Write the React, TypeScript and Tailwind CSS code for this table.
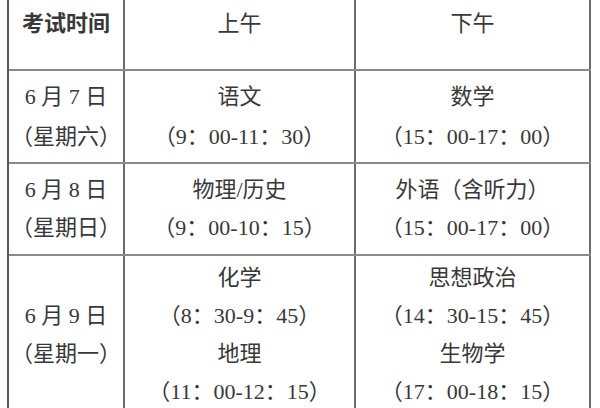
import React from "react";

const font = {
  fontFamily: '"Liberation Serif", "Noto Sans CJK SC", serif',
};

function Cell({
  lines,
  bold,
  className = "",
}: {
  lines: string[];
  bold?: boolean;
  className?: string;
}) {
  return (
    <div
      className={`flex flex-col items-center justify-center border-r-2 border-[#6b6b6b] text-[22px] leading-[38px] text-[#383838] ${
        bold ? "font-bold" : ""
      } ${className}`}
    >
      {lines.map((l, i) => (
        <div key={i} className="whitespace-pre">
          {l}
        </div>
      ))}
    </div>
  );
}

export default function App() {
  return (
    <div className="h-[408px] w-[600px] overflow-hidden bg-white" style={font}>
      <div className="ml-[7px] w-[584px] border-l-2 border-[#5a5a5a]">
        {/* header */}
        <div className="grid h-[71px] grid-cols-[116px_231px_235px] border-b-2 border-[#8a8a8a]">
          <Cell lines={["考试时间"]} bold className="justify-start pt-[5px] text-[#2a2a2a]" />
          <Cell lines={["上午"]} className="justify-start pt-[5px] text-[#2a2a2a]" />
          <Cell lines={["下午"]} className="justify-start pt-[5px] text-[#2a2a2a]" />
        </div>
        {/* row 1 */}
        <div className="grid h-[93px] grid-cols-[116px_231px_235px] border-b-2 border-[#8a8a8a]">
          <Cell lines={["6 月 7 日", "（星期六）"]} className="leading-[40px]" />
          <Cell lines={["语文", "（9：00-11：30）"]} className="leading-[40px]" />
          <Cell lines={["数学", "（15：00-17：00）"]} className="leading-[40px]" />
        </div>
        {/* row 2 */}
        <div className="grid h-[92px] grid-cols-[116px_231px_235px] border-b-2 border-[#8a8a8a]">
          <Cell lines={["6 月 8 日", "（星期日）"]} />
          <Cell lines={["物理/历史", "（9：00-10：15）"]} />
          <Cell lines={["外语（含听力）", "（15：00-17：00）"]} />
        </div>
        {/* row 3 */}
        <div className="grid h-[158px] grid-cols-[116px_231px_235px]">
          <Cell lines={["6 月 9 日", "（星期一）"]} />
          <Cell lines={["化学", "（8：30-9：45）", "地理", "（11：00-12：15）"]} />
          <Cell lines={["思想政治", "（14：30-15：45）", "生物学", "（17：00-18：15）"]} />
        </div>
      </div>
    </div>
  );
}
